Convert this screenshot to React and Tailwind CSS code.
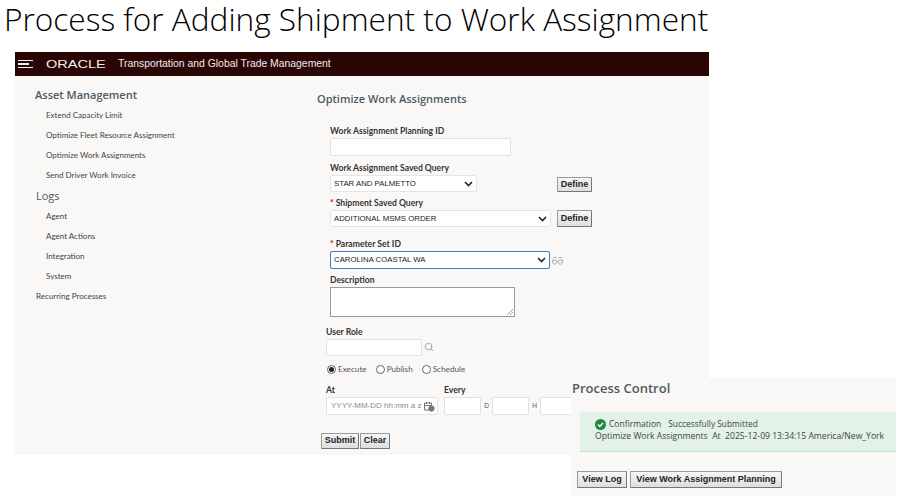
import { Search } from "lucide-react";

const sans = "font-['Open_Sans',sans-serif]";
const lato = "font-['Lato',sans-serif]";
const arial = "font-['Liberation_Sans',sans-serif]";

const navGroups = [
  {
    title: "Asset Management",
    bold: true,
    items: ["Extend Capacity Limit", "Optimize Fleet Resource Assignment", "Optimize Work Assignments", "Send Driver Work Invoice"],
  },
  { title: "Logs", items: ["Agent", "Agent Actions", "Integration", "System"] },
];

function OldButton({ children, className = "" }) {
  return (
    <button
      className={`${arial} flex items-center justify-center rounded-[1px] border border-[#9a9a9a] border-b-[#777] border-r-[#777] bg-gradient-to-b from-[#f6f6f6] to-[#dedede] text-[9px] font-bold text-[#222] ${className}`}
    >
      {children}
    </button>
  );
}

function Label({ children, required, className = "" }) {
  return (
    <div className={`${lato} flex h-[14px] items-center text-[8.6px] font-bold leading-none text-[#333] ${className}`}>
      {required && <span className="mr-[2px] text-[#d00]">*</span>}
      {children}
    </div>
  );
}

function Select({ value, className = "" }) {
  return (
    <div className={`${arial} flex items-center justify-between rounded-[2px] border border-[#e4e4e4] bg-white pl-[3px] pr-[3px] text-[7.8px] text-[#222] ${className}`}>
      <span>{value}</span>
      <svg width="9" height="6" viewBox="0 0 9 6" fill="none" stroke="#222" strokeWidth="1.6">
        <path d="M1 1l3.5 3.5L8 1" />
      </svg>
    </div>
  );
}

function Box({ className = "" }) {
  return <div className={`rounded-[2px] border border-[#e2e2e2] bg-white ${className}`} />;
}

function Radio({ checked, label }) {
  return (
    <div className="flex items-center gap-[2px]">
      <span className="flex h-[9px] w-[9px] items-center justify-center rounded-full border border-[#666] bg-white">
        {checked && <span className="h-[5px] w-[5px] rounded-full bg-[#222]" />}
      </span>
      <span className={`${lato} text-[8.2px] text-[#555]`}>{label}</span>
    </div>
  );
}

export default function App() {
  return (
    <div className="relative h-[497px] w-[905px] overflow-hidden bg-white">
      <h1 className={`${sans} h-[52px] pl-[4px] text-[31.6px] font-light leading-[38px] text-black`}>
        Process for Adding Shipment to Work Assignment
      </h1>

      <div className="ml-[15px] h-[403px] w-[694px] bg-[#faf8f7]">
        <div className="flex h-[24px] items-center bg-[#2a0505]">
          <div className="ml-[3px] flex w-[15px] flex-col gap-[2px]">
            <span className="h-[1.5px] w-[15px] bg-[#f2eeee]" />
            <span className="h-[1.5px] w-[11px] bg-[#f2eeee]" />
            <span className="h-[1.5px] w-[15px] bg-[#f2eeee]" />
          </div>
          <span className={`${arial} ml-[13px] w-[72px] origin-left scale-x-[1.32] text-[11px] leading-none text-[#f4efef]`}>
            ORACLE
          </span>
          <span className={`${arial} text-[10.4px] text-[#f0eaea]`}>
            Transportation and Global Trade Management
          </span>
        </div>

        <div className="flex">
          <nav className={`${lato} w-[302px] pt-[9px] text-[8px] text-[#444]`}>
            {navGroups.map((group) => (
              <div key={group.title} className={group.bold ? "" : "mt-[1px]"}>
                <div className={`${sans} flex h-5 items-center text-[11px] text-[#4c5a64] ${group.bold ? "pl-[20px] font-semibold" : "pl-[21px] font-normal"}`}>
                  {group.title}
                </div>
                {group.items.map((item) => (
                  <div key={item} className="flex h-5 items-center pl-[31px]">
                    {item}
                  </div>
                ))}
              </div>
            ))}
            <div className="flex h-5 items-center pl-[21px]">Recurring Processes</div>
          </nav>

          <main className="flex-1 pt-[15px]">
            <div className={`${sans} h-[16px] text-[11px] font-semibold leading-[16px] text-[#4c5a64]`}>
              Optimize Work Assignments
            </div>
            <div className="ml-[13px] mt-[17px]">
              <Label>Work Assignment Planning ID</Label>
              <Box className="h-[18px] w-[181px]" />

              <Label className="mt-[5px]">Work Assignment Saved Query</Label>
              <div className="flex items-end">
                <Select value="STAR AND PALMETTO" className="h-[17px] w-[147px]" />
                <OldButton className="ml-[80px] h-[15px] w-[35px]">Define</OldButton>
              </div>

              <Label className="mt-[4px]" required>Shipment Saved Query</Label>
              <div className="flex items-center">
                <Select value="ADDITIONAL MSMS ORDER" className="h-[17px] w-[221px]" />
                <OldButton className="ml-[6px] h-[17px] w-[35px]">Define</OldButton>
              </div>

              <Label className="mt-[10px]" required>Parameter Set ID</Label>
              <div className="flex items-center">
                <Select value="CAROLINA COASTAL WA" className="h-[18px] w-[220px] !border-[#3f7fb5]" />
                <svg className="ml-[2px]" width="11" height="9" viewBox="0 0 11 9" fill="none" stroke="#b0b0b0" strokeWidth="1">
                  <circle cx="2.7" cy="6" r="2.2" />
                  <circle cx="8.3" cy="6" r="2.2" />
                  <path d="M1 1.5h3.5M6.5 1.5H10M.5 6V3.5M10.5 6V3.5M4.9 5.5h1.2" />
                </svg>
              </div>

              <Label className="mt-[4px]">Description</Label>
              <div className="relative h-[30px] w-[185px] border border-[#9b9b9b] bg-white">
                <svg className="absolute bottom-[1px] right-[1px]" width="6" height="6" viewBox="0 0 6 6" stroke="#777" strokeWidth="0.7">
                  <path d="M0 6l6-6M3 6l3-3" />
                </svg>
              </div>

              <div className="-ml-[4px]">
                <Label className="mt-[8px]">User Role</Label>
                <div className="flex items-center">
                  <Box className="h-[17px] w-[96px]" />
                  <Search className="ml-[2px] -mt-[2px] text-[#9a9a9a]" size={10} strokeWidth={2} />
                </div>

                <div className="ml-[1px] mt-[7px] flex h-[12px] items-center gap-[9px]">
                  <Radio checked label="Execute" />
                  <Radio label="Publish" />
                  <Radio label="Schedule" />
                </div>

                <div className="mt-[8px] flex">
                  <div>
                    <Label>At</Label>
                    <div className="flex h-[18px] w-[112px] items-center justify-between rounded-[2px] border border-[#e2e2e2] bg-white pl-[4px] pr-[2px]">
                      <span className={`${arial} text-[8px] text-[#8a8a8a]`}>YYYY-MM-DD hh:mm a z</span>
                      <svg width="12" height="11" viewBox="0 0 12 11" fill="none" stroke="#777" strokeWidth="1">
                        <path d="M6 9H1.5V2h7v2.5M1.5 4.5h7M3.5 1v2M6.5 1v2" />
                        <circle cx="8.5" cy="7.5" r="2.7" fill="#777" />
                      </svg>
                    </div>
                  </div>
                  <div className="ml-[6px]">
                    <Label>Every</Label>
                    <div className="flex items-center">
                      <Box className="h-[18px] w-[37px]" />
                      <span className={`${arial} w-[11px] text-center text-[6.5px] text-[#555]`}>D</span>
                      <Box className="h-[18px] w-[37px]" />
                      <span className={`${arial} w-[11px] text-center text-[6.5px] text-[#555]`}>H</span>
                      <Box className="h-[18px] w-[37px]" />
                    </div>
                  </div>
                </div>

                <div className="-ml-[5px] mt-[18px] flex gap-[1px]">
                  <OldButton className="h-[16px] w-[38px]">Submit</OldButton>
                  <OldButton className="h-[16px] w-[30px]">Clear</OldButton>
                </div>
              </div>
            </div>
          </main>
        </div>
      </div>

      {/* pasted screenshot that sits over the corner of the form */}
      <div className="absolute left-[571px] top-[378px] h-[118px] w-[325px] bg-[#faf8f7]">
        <div className={`${sans} pl-[1px] pt-[1px] text-[13px] font-semibold leading-[19px] text-[#4c5a64]`}>Process Control</div>
        <div className={`${sans} ml-[9px] mt-[14px] h-[40px] border-b border-[#bfe3c8] bg-[#e2f2e8] pl-[15px] pt-[6px] text-[8.6px] leading-[12px] text-[#444]`}>
          <div className="flex items-center">
            <svg width="11" height="11" viewBox="0 0 11 11">
              <circle cx="5.5" cy="5.5" r="5.5" fill="#1f8a3d" />
              <path d="M3 5.6l1.8 1.8L8 4" fill="none" stroke="#fff" strokeWidth="1.4" />
            </svg>
            <span className="ml-[3px] text-[8.5px]">Confirmation</span>
            <span className="ml-[7px] text-[8.4px]">Successfully Submitted</span>
          </div>
          <div className="whitespace-pre">Optimize Work Assignments  At  2025-12-09 13:34:15 America/New_York</div>
        </div>
        <div className="ml-[6px] mt-[19px] flex gap-[3px]">
          <OldButton className="h-[17px] w-[50px]">View Log</OldButton>
          <OldButton className="h-[17px] w-[152px]">View Work Assignment Planning</OldButton>
        </div>
      </div>
    </div>
  );
}
